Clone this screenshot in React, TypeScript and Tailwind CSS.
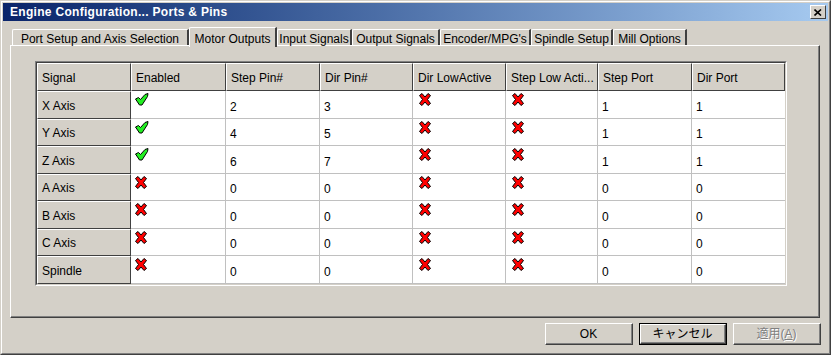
import React from "react";

const font = { fontFamily: '"Liberation Sans", "Noto Sans CJK JP", sans-serif' };

const columns = [
  { label: "Signal", w: "w-[94px]" },
  { label: "Enabled", w: "w-[95px]" },
  { label: "Step Pin#", w: "w-[94px]" },
  { label: "Dir Pin#", w: "w-[93px]" },
  { label: "Dir LowActive", w: "w-[93px]" },
  { label: "Step Low Acti...", w: "w-[92px]" },
  { label: "Step Port", w: "w-[94px]" },
  { label: "Dir Port", w: "w-[93px]" },
];

const rows = [
  { name: "X Axis", on: true, step: 2, dir: 3, port: 1 },
  { name: "Y Axis", on: true, step: 4, dir: 5, port: 1 },
  { name: "Z Axis", on: true, step: 6, dir: 7, port: 1 },
  { name: "A Axis", on: false, step: 0, dir: 0, port: 0 },
  { name: "B Axis", on: false, step: 0, dir: 0, port: 0 },
  { name: "C Axis", on: false, step: 0, dir: 0, port: 0 },
  { name: "Spindle", on: false, step: 0, dir: 0, port: 0 },
];

const tabs = [
  { label: "Port Setup and Axis Selection", w: "w-[177px]" },
  { label: "Motor Outputs", w: "w-[88px]", active: true },
  { label: "Input Signals", w: "w-[75px]" },
  { label: "Output Signals", w: "w-[88px]" },
  { label: "Encoder/MPG's", w: "w-[91px]" },
  { label: "Spindle Setup", w: "w-[82px]" },
  { label: "Mill Options", w: "w-[74px]" },
];

function Check() {
  return (
    <svg width="14" height="13" viewBox="0 0 14 13">
      <polygon
        points="0.5,6 3.5,4.5 5.5,6.5 10,1.5 13,0.5 12.5,3.5 7,12 4.5,12"
        fill="#22ee22"
        stroke="#000"
        strokeWidth="1"
        strokeLinejoin="round"
      />
    </svg>
  );
}

function Cross() {
  return (
    <svg width="12" height="13" viewBox="0 0 12 13">
      <polygon
        points="0.5,2.5 3,0.5 6,4 9,0.5 11.5,2.5 8.5,6.5 11.5,10.5 9,12.5 6,9 3,12.5 0.5,10.5 3.5,6.5"
        fill="#ff0000"
        stroke="#000"
        strokeWidth="1"
        strokeLinejoin="round"
      />
    </svg>
  );
}

function Button({ label, primary, disabled }: { label: string; primary?: boolean; disabled?: boolean }) {
  return (
    <div className={`w-[88px] h-[22px] ${primary ? "border border-black" : ""}`}>
      <div className="w-full h-full border-t border-l border-white border-r border-b border-r-[#404040] border-b-[#404040]">
        <div className="w-full h-full border-r border-b border-r-[#808080] border-b-[#808080] flex items-center justify-center text-[12px]">
          {disabled ? (
            <span className="text-[#808080] [text-shadow:1px_1px_0_#fff]">
              適用(<span className="underline">A</span>)
            </span>
          ) : (
            <span className="text-black">{label}</span>
          )}
        </div>
      </div>
    </div>
  );
}

export default function App() {
  return (
    <div style={font} className="w-[831px] h-[355px] bg-[#d4d0c8] text-black select-none">
      <div className="w-full h-full border border-t-[#d4d0c8] border-l-[#d4d0c8] border-r-[#404040] border-b-[#404040]">
        <div className="w-full h-full border border-t-white border-l-white border-r-[#808080] border-b-[#808080] p-px flex flex-col">
          {/* Title bar */}
          <div className="h-[18px] flex items-center justify-between pl-[7px] pr-[2px] bg-gradient-to-r from-[#0a246a] to-[#a6caf0]">
            <span className="text-white font-bold text-[12px] tracking-[0.3px]">Engine Configuration... Ports &amp; Pins</span>
            <div className="w-[16px] h-[14px] bg-[#d4d0c8] border border-t-white border-l-white border-r-[#404040] border-b-[#404040] flex items-center justify-center">
              <svg width="8" height="7" viewBox="0 0 8 7">
                <path d="M0.5 0.5 L7 6.5 M7 0.5 L0.5 6.5" stroke="#000" strokeWidth="1.6" />
              </svg>
            </div>
          </div>

          {/* Tabs */}
          <div className="mt-[6px] h-[18px] flex items-end pl-[9px] relative z-10">
            {tabs.map((t) =>
              t.active ? (
                <div
                  key={t.label}
                  className={`${t.w} h-[20px] -mb-[2px] bg-[#d4d0c8] border-t border-l border-white border-r-2 border-r-[#404040] rounded-tl-[2px] flex items-start justify-center pt-[2px] text-[12px]`}
                >
                  {t.label}
                </div>
              ) : (
                <div
                  key={t.label}
                  className={`${t.w} h-[16px] border-t border-l border-white border-r-2 border-r-[#404040] rounded-tl-[2px] flex items-center justify-center pt-[2px] text-[12px]`}
                >
                  {t.label}
                </div>
              )
            )}
          </div>

          {/* Panel */}
          <div className="ml-[7px] w-[810px] h-[273px] border-t border-l border-white border-r border-b border-r-[#404040] border-b-[#404040]">
            <div className="w-full h-full border-r border-b border-r-[#808080] border-b-[#808080] pl-[24px] pt-[15px]">
              {/* Grid */}
              <div className="w-[752px] border border-t-[#808080] border-l-[#808080] border-r-white border-b-white">
                <div className="border border-t-[#404040] border-l-[#404040] border-r-[#d4d0c8] border-b-[#d4d0c8] bg-white">
                  <div className="flex h-[28px]">
                    {columns.map((c) => (
                      <div
                        key={c.label}
                        className={`${c.w} bg-[#d4d0c8] border-t border-l border-white border-r border-b border-r-[#404040] border-b-[#404040] flex items-center pl-[4px] pt-px text-[12px] whitespace-nowrap overflow-hidden`}
                      >
                        {c.label}
                      </div>
                    ))}
                  </div>
                  {rows.map((r) => {
                    const cells = [r.step, r.dir];
                    return (
                      <div key={r.name} className="flex h-[27.5px]">
                        <div className="w-[94px] bg-[#d4d0c8] border-t border-l border-white border-r border-b border-r-[#404040] border-b-[#404040] flex items-center pl-[4px] pt-[2px] text-[12px]">
                          {r.name}
                        </div>
                        <div className="w-[95px] border-r border-b border-[#c0c0c0] pl-[4px] pt-[2px]">
                          {r.on ? <Check /> : <Cross />}
                        </div>
                        {cells.map((v, i) => (
                          <div
                            key={i}
                            className={`${i === 0 ? "w-[94px]" : "w-[93px]"} border-r border-b border-[#c0c0c0] flex items-center pl-[4px] pt-[5px] text-[12px]`}
                          >
                            {v}
                          </div>
                        ))}
                        <div className="w-[93px] border-r border-b border-[#c0c0c0] pl-[6px] pt-[2px]">
                          <Cross />
                        </div>
                        <div className="w-[92px] border-r border-b border-[#c0c0c0] pl-[6px] pt-[2px]">
                          <Cross />
                        </div>
                        <div className="w-[94px] border-r border-b border-[#c0c0c0] flex items-center pl-[4px] pt-[5px] text-[12px]">
                          {r.port}
                        </div>
                        <div className="w-[93px] border-b border-[#c0c0c0] flex items-center pl-[4px] pt-[5px] text-[12px]">
                          {r.port}
                        </div>
                      </div>
                    );
                  })}
                </div>
              </div>
            </div>
          </div>

          {/* Buttons */}
          <div className="mt-[5px] flex justify-end gap-[6px] pr-[7px]">
            <Button label="OK" />
            <Button label="キャンセル" primary />
            <Button label="適用(A)" disabled />
          </div>
        </div>
      </div>
    </div>
  );
}
